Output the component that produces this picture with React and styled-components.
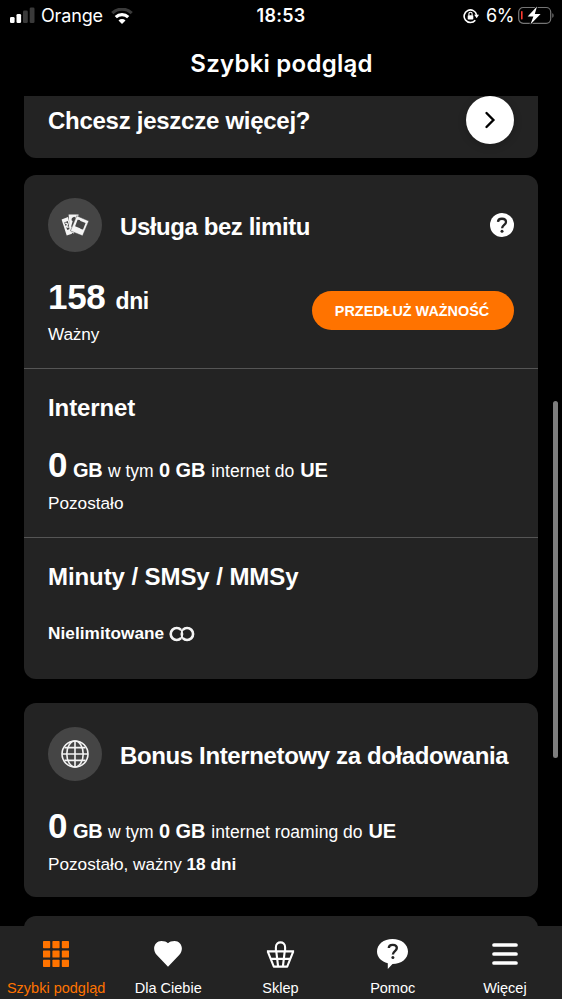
import React from "react";
import styled, { createGlobalStyle } from "styled-components";

const GlobalStyle = createGlobalStyle`
  * { box-sizing: border-box; }
  html, body { margin: 0; background: #000; }
`;

const ORANGE = "#ff7300";
const CARD = "#232323";

const Screen = styled.div`
  position: relative;
  display: flex;
  flex-direction: column;
  width: 562px;
  height: 999px;
  overflow: hidden;
  background: #000;
  color: #fff;
  font-family: "Liberation Sans", Arial, sans-serif;
`;

const StatusBar = styled.div`
  display: grid;
  grid-template-columns: 1fr auto 1fr;
  align-items: center;
  height: 31px;
  padding: 0 8px 0 9px;
  font-family: Inter, sans-serif;
  font-size: 18px;
  line-height: 31px;
`;

const StatusGroup = styled.div`
  display: flex;
  align-items: center;
  justify-content: ${(p) => (p.$end ? "flex-end" : "flex-start")};
`;

const Carrier = styled.span`
  margin: 0 8px 0 6px;
  font-size: 18px;
  letter-spacing: -0.15px;
`;

const Clock = styled.span`
  padding-right: 1px;
  font-weight: 600;
  font-size: 18px;
  letter-spacing: 0.25px;
`;

const BatteryLevel = styled.span`
  margin: 0 4px 0 7px;
  font-size: 18px;
  letter-spacing: -0.4px;
`;

const Header = styled.h1`
  margin: 0;
  height: 65px;
  padding-left: 1px;
  font-family: Inter, sans-serif;
  font-size: 24px;
  font-weight: 600;
  line-height: 65px;
  text-align: center;
  letter-spacing: 0.25px;
`;

const Feed = styled.main`
  flex: 1;
  min-height: 0;
  overflow: hidden;
  padding: 0 24px;
`;

const Card = styled.section`
  height: ${(p) => p.$height}px;
  margin-bottom: ${(p) => p.$gap}px;
  border-radius: ${(p) => (p.$cut ? "0 0 12px 12px" : "12px")};
  background: ${CARD};
`;

const Section = styled.div`
  height: ${(p) => p.$height}px;
  padding: ${(p) => p.$top}px 24px 0;
  border-top: ${(p) => (p.$divided ? "1px solid #555" : "0")};
`;

const LinkRow = styled.div`
  display: flex;
  align-items: center;
  justify-content: space-between;
  height: 48px;
  padding: 0 24px;
`;

const CardHeader = styled.div`
  display: flex;
  align-items: center;
  height: 54px;
  margin-bottom: ${(p) => p.$gap}px;
`;

const Title = styled.h2`
  flex: 1;
  margin: 0;
  padding-top: ${(p) => p.$drop || 1}px;
  padding-bottom: ${(p) => p.$below || 0}px;
  font-size: 24px;
  font-weight: 700;
  line-height: 28px;
  white-space: nowrap;
  letter-spacing: ${(p) => p.$track || 0}px;
`;

const RoundButton = styled.button`
  display: grid;
  place-items: center;
  width: 48px;
  height: 48px;
  padding: 0;
  border: 0;
  border-radius: 50%;
  background: #fff;
  box-shadow: 0 2px 8px rgba(0, 0, 0, 0.2);
`;

const IconDisc = styled.div`
  display: grid;
  place-items: center;
  width: 54px;
  height: 54px;
  margin-right: 18px;
  border-radius: 50%;
  background: #454545;
`;

const Split = styled.div`
  display: flex;
  justify-content: space-between;
`;

const Amount = styled.div`
  height: 40px;
  padding-top: ${(p) => p.$drop || 0}px;
  font-size: 35px;
  font-weight: 700;
  line-height: 40px;
  white-space: nowrap;
  letter-spacing: ${(p) => p.$track || 0}px;
`;

const Unit = styled.span`
  margin-left: ${(p) => p.$before}px;
  font-size: ${(p) => p.$size || 20}px;
  line-height: 1;
  letter-spacing: ${(p) => p.$track || 0}px;
`;

const Words = styled.span`
  margin-left: ${(p) => p.$before}px;
  font-size: 17.5px;
  font-weight: 400;
  line-height: 1;
  letter-spacing: ${(p) => p.$track || 0}px;
`;

const Note = styled.div`
  display: flex;
  align-items: baseline;
  height: 22px;
  margin-top: ${(p) => p.$top || 0}px;
  font-size: 17.2px;
  line-height: 22px;
  font-weight: ${(p) => (p.$bold ? 700 : 400)};
  letter-spacing: ${(p) => p.$track || 0}px;
  white-space: pre;
  svg { align-self: center; margin: 2px 0 0 5px; }
`;

const PillButton = styled.button`
  width: 202px;
  height: 39px;
  margin-top: 14px;
  padding: 0 2px 0 0;
  border: 0;
  border-radius: 20px;
  background: ${ORANGE};
  color: #fff;
  font: 700 14.4px "Liberation Sans", Arial, sans-serif;
  white-space: nowrap;
`;

const ScrollThumb = styled.div`
  position: absolute;
  top: 401px;
  right: 4px;
  width: 5px;
  height: 357px;
  border-radius: 3px;
  background: #7e7e7e;
`;

const TabBar = styled.nav`
  display: grid;
  grid-template-columns: repeat(5, 1fr);
  height: 73px;
  padding-right: 1px;
  background: ${CARD};
`;

const Tab = styled.div`
  display: flex;
  flex-direction: column;
  align-items: center;
  color: ${(p) => (p.$active ? ORANGE : "#fff")};
  font-size: 14.5px;
  line-height: 18px;
  white-space: nowrap;
`;

const TabIcon = styled.div`
  display: grid;
  place-items: center;
  height: 53px;
  padding-top: 3px;
`;

const Signal = () => (
  <svg width="26" height="18" viewBox="0 0 26 18">
    <rect x="1" y="10" width="4.6" height="6" rx="1.3" fill="#fff" />
    <rect x="7.5" y="7" width="4.6" height="9" rx="1.3" fill="#fff" />
    <rect x="14" y="3.5" width="4.8" height="12.5" rx="1.3" fill="#3a3a3a" />
    <rect x="20.7" y="0.5" width="4.8" height="15.5" rx="1.3" fill="#3a3a3a" />
  </svg>
);

const Wifi = () => (
  <svg width="22" height="16" viewBox="0 0 22 16" fill="none">
    <path d="M1.3 5.1a14 14 0 0 1 19.4 0" stroke="#3a3a3a" strokeWidth="3.2" />
    <path d="M4.8 9.2a9 9 0 0 1 12.4 0" stroke="#fff" strokeWidth="3.2" />
    <path d="M11 16l-3.5-3.5a4.9 4.9 0 0 1 7 0z" fill="#fff" />
  </svg>
);

const RotationLock = () => (
  <svg width="16" height="16" viewBox="0 0 16 16" fill="none">
    <path d="M12.3 12.2A6.3 6.3 0 1 1 13.6 7" stroke="#fff" strokeWidth="1.6" />
    <path d="M11.2 6.8h4.8l-2.3 3.4z" fill="#fff" />
    <rect x="4.7" y="7.2" width="5.6" height="4.2" rx=".7" fill="#fff" />
    <path d="M5.9 7.4V5.8a1.6 1.6 0 0 1 3.2 0v1.6" stroke="#fff" strokeWidth="1.1" />
  </svg>
);

const Battery = () => (
  <svg width="36" height="20" viewBox="0 0 36 20">
    <rect x=".7" y="1.5" width="32" height="15.8" rx="4.5" fill="none" stroke="#757575" strokeWidth="1.2" />
    <path d="M34.3 7.3c1.7.5 1.7 4 0 4.5z" fill="#757575" />
    <rect x="3" y="5" width="1.6" height="8.5" rx=".7" fill="#ff3b30" />
    <path d="M19 .6L9.6 10.4h5.8L12.4 18.4 22.6 8h-5.8z" fill="#fff" stroke="#000" strokeWidth="1.8" paintOrder="stroke" />
  </svg>
);

const Chevron = () => (
  <svg width="24" height="24" viewBox="0 0 24 24" fill="none">
    <path d="M8.5 5l6.9 7-6.9 7" stroke="#000" strokeWidth="2.4" strokeLinecap="round" />
  </svg>
);

const Question = () => (
  <svg width="24" height="24" viewBox="0 0 24 24" fill="none">
    <circle cx="12" cy="12" r="12" fill="#fff" />
    <path d="M8 8.9C8.1 4.6 16 4.8 16 9c0 2.8-3.9 3-3.9 6.3" stroke={CARD} strokeWidth="2.3" />
    <circle cx="12" cy="18.2" r="1.5" fill={CARD} />
  </svg>
);

const Cards = () => (
  <svg width="28" height="22" viewBox="0 0 28 22" fill="none">
    <path d="M.6 5.6L7 3l4 16.8-5.3 1.8z" fill="#f4f4f4" />
    <path d="M3.2 8.4l3.6-1.5 1.9 8.1-2.4 1z" fill="#454545" />
    <path d="M4.2 9.4c3-.6 2.4 2.2 1 3.2l2.4.6" stroke="#f4f4f4" strokeWidth="1.4" />
    <path d="M7.6.6h10L13 19.5l-4-1.3z" fill="#f4f4f4" />
    <path d="M13.2 2.8c-2.4.8-2.9 2.1-2.5 3.6l1 .5-1.5 5.4.9 1.2 3.4-8c.4-1.2.2-2.2-1.3-2.7z" fill="#454545" />
    <path d="M15.7 1.8L27.8 7 21.6 21.8 9.4 16.9z" fill="#f4f4f4" stroke="#454545" strokeWidth=".5" />
    <path d="M16.6 5.8l2.1.2.8.9 5.1 2.1-2.6 6.4-2.2-.3-.8-.8-4.9-2z" fill="#454545" />
  </svg>
);

const Globe = () => (
  <svg width="28" height="28" viewBox="0 0 28 28" fill="none" stroke="#f4f4f4" strokeWidth="1.6">
    <circle cx="14" cy="14" r="13" />
    <ellipse cx="14" cy="14" rx="8.2" ry="13" />
    <path d="M14 1v26M1 14h26M3.5 7.6h21M3.5 20.4h21" />
  </svg>
);

const InfinityIcon = () => (
  <svg width="26" height="16" viewBox="0 0 26 16" fill="none" stroke="#f4f4f4">
    <circle cx="7.6" cy="8" r="6" strokeWidth="1.5" />
    <circle cx="18.2" cy="8" r="6" strokeWidth="1.5" />
    <path d="M12 3.8A6 6 0 1 0 12 12.2" strokeWidth="2.6" />
    <path d="M13.8 12.2A6 6 0 1 0 13.8 3.8" strokeWidth="2.6" />
  </svg>
);

const GridIcon = () => (
  <svg width="26" height="26" viewBox="0 0 26 26" fill={ORANGE}>
    {[0, 9.4, 18.8].map((y) =>
      [0, 9.4, 18.8].map((x) => <rect key={`${x}-${y}`} x={x} y={y} width="7.2" height="7.2" rx=".7" />)
    )}
  </svg>
);

const Heart = () => (
  <svg width="28" height="26" viewBox="0 0 28 26" fill="#fff">
    <path d="M14 25.7L2.8 14.1C-2.8 7.8 1.2 0 7.4 0 10.3 0 12.5.9 14 2.2 15.5.9 17.7 0 20.6 0 26.8 0 30.8 7.8 25.2 14.1z" />
  </svg>
);

const Basket = () => (
  <svg width="29" height="27" viewBox="0 0 29 27" fill="none" stroke="#fff" strokeWidth="2.1">
    <path d="M.9 10.4h27.2M1.8 10.6l6 15h13.4l6-15M4.6 17.9h19.8M10.3 10.5l1.8 15M18.7 10.5l-1.8 15" strokeLinejoin="round" />
    <path d="M9.9 10.4V6.2c0-6.4 9.2-6.4 9.2 0v4.2" />
  </svg>
);

const HelpBubble = () => (
  <svg width="31" height="30" viewBox="0 0 31 30" fill="none">
    <path d="M15.5 0C24.4 0 31 5.3 31 12.5S24.4 25 15.5 25L10.8 30V24.3C4.4 22.6 0 18.2 0 12.5 0 5.3 6.6 0 15.5 0z" fill="#fff" />
    <path d="M11.8 9c.1-4.3 8-4.1 8 .1 0 2.9-3.9 3.1-3.9 6.4" stroke={CARD} strokeWidth="2.4" />
    <circle cx="15.9" cy="18.5" r="1.5" fill={CARD} />
  </svg>
);

const Menu = () => (
  <svg width="26" height="22" viewBox="0 0 26 22" stroke="#fff" strokeWidth="3.7" strokeLinecap="round">
    <path d="M2 2h22M2 11h22M2 20h22" />
  </svg>
);

const tabs = [
  { label: "Szybki podgląd", icon: <GridIcon />, active: true },
  { label: "Dla Ciebie", icon: <Heart /> },
  { label: "Sklep", icon: <Basket /> },
  { label: "Pomoc", icon: <HelpBubble /> },
  { label: "Więcej", icon: <Menu /> },
];

const DataAmount = ({ words }) => (
  <Amount $drop={1}>
    0<Unit $before={5.5} $track={-0.3}>GB</Unit>
    <Words $before={5.5}>w tym</Words>
    <Unit $before={5.5} $track={-0.1}>0 GB</Unit>
    <Words $before={6} $track={0.02}>{words}</Words>
    <Unit $before={6} $track={-0.2}>UE</Unit>
  </Amount>
);

export default function App() {
  return (
    <Screen>
      <GlobalStyle />
      <StatusBar>
        <StatusGroup>
          <Signal />
          <Carrier>Orange</Carrier>
          <Wifi />
        </StatusGroup>
        <Clock>18:53</Clock>
        <StatusGroup $end>
          <RotationLock />
          <BatteryLevel>6%</BatteryLevel>
          <Battery />
        </StatusGroup>
      </StatusBar>
      <Header>Szybki podgląd</Header>
      <Feed>
        <Card $height={62} $gap={16.5} $cut>
          <LinkRow>
            <Title $track={-0.27}>Chcesz jeszcze więcej?</Title>
            <RoundButton aria-label="Dalej"><Chevron /></RoundButton>
          </LinkRow>
        </Card>
        <Card $height={504.5} $gap={24}>
          <Section $height={193.5} $top={23.5}>
            <CardHeader $gap={25}>
              <IconDisc><Cards /></IconDisc>
              <Title $track={-0.43} $drop={3}>Usługa bez limitu</Title>
              <Question />
            </CardHeader>
            <Split>
              <div>
                <Amount $track={-0.3}>158<Unit $before={10} $size={23} $track={-0.4}>dni</Unit></Amount>
                <Note $top={6} $track={-0.15}>Ważny</Note>
              </div>
              <PillButton>PRZEDŁUŻ WAŻNOŚĆ</PillButton>
            </Split>
          </Section>
          <Section $height={169} $top={24} $divided>
            <Title $track={-0.1} $below={22}>Internet</Title>
            <DataAmount words="internet do" />
            <Note $top={8}>Pozostało</Note>
          </Section>
          <Section $height={142} $top={24} $divided>
            <Title $track={-0.08}>Minuty / SMSy / MMSy</Title>
            <Note $top={31} $track={0.05} $bold>Nielimitowane<InfinityIcon /></Note>
          </Section>
        </Card>
        <Card $height={194} $gap={19}>
          <Section $height={194} $top={24}>
            <CardHeader $gap={24}>
              <IconDisc><Globe /></IconDisc>
              <Title $track={-0.37} $drop={3}>Bonus Internetowy za doładowania</Title>
            </CardHeader>
            <DataAmount words="internet roaming do" />
            <Note $top={8}>Pozostało, ważny <b>18 dni</b></Note>
          </Section>
        </Card>
        <Card $height={180} $gap={0} />
      </Feed>
      <TabBar>
        {tabs.map((t) => (
          <Tab key={t.label} $active={t.active}>
            <TabIcon>{t.icon}</TabIcon>
            {t.label}
          </Tab>
        ))}
      </TabBar>
      <ScrollThumb />
    </Screen>
  );
}
